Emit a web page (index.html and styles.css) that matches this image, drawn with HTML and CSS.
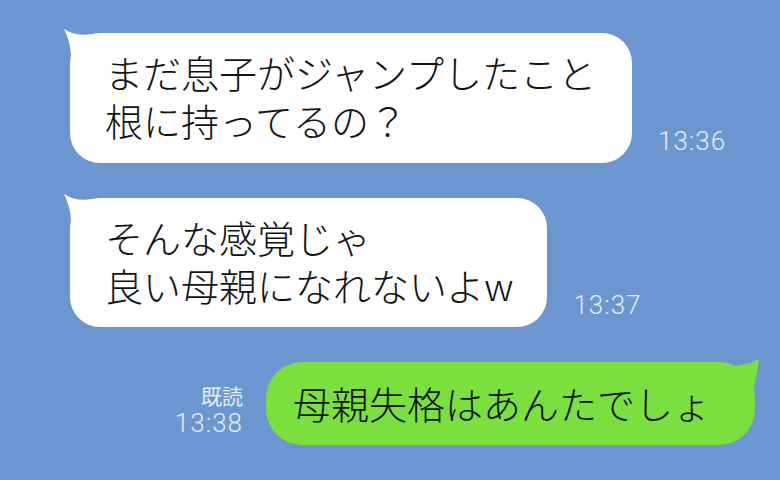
FILE: index.html
```html
<!DOCTYPE html>
<html lang="ja">
<head>
  <meta charset="UTF-8" />
  <meta name="viewport" content="width=device-width, initial-scale=1" />
  <title>トーク</title>
  <link rel="stylesheet" href="styles.css">
</head>
<body>

  <main class="chat">

    <div class="row incoming">
      <div class="bubble white first">
        <svg class="tail tail-left" viewBox="0 0 40 40" aria-hidden="true">
          <path d="M32,9 Q16,12 4,4 Q10,16 11,30 L32,30 Z" />
        </svg>
        <span class="line">まだ息子がジャンプしたこと</span>
        <span class="line">根に持ってるの？</span>
      </div>
      <span class="time">13:36</span>
    </div>

    <div class="row incoming">
      <div class="bubble white second">
        <svg class="tail tail-left" viewBox="0 0 40 40" aria-hidden="true">
          <path d="M32,9 Q16,12 4,4 Q10,16 11,30 L32,30 Z" />
        </svg>
        <span class="line">そんな感覚じゃ</span>
        <span class="line">良い母親になれないよw</span>
      </div>
      <span class="time">13:37</span>
    </div>

    <div class="row outgoing">
      <div class="meta">
        <span class="read">既読</span>
        <span class="time">13:38</span>
      </div>
      <div class="bubble green">
        <svg class="tail tail-right" viewBox="0 0 44 44" aria-hidden="true">
          <path d="M14,12 Q30,10 38,5 Q36,20 33,34 L14,34 Z" />
        </svg>
        <span class="line">母親失格はあんたでしょ</span>
      </div>
    </div>

  </main>

</body>
</html>
```

FILE: styles.css
```css
* {
  box-sizing: border-box;
}
html, body {
  margin: 0;
  padding: 0;
  height: 100%;
  background: #6c96cf;
  font-family: "Noto Sans CJK JP", "Noto Sans", sans-serif;
  overflow: hidden;
}
.chat {
  display: flex;
  flex-direction: column;
  gap: 35px;
  padding: 33px 25px 0 70px;
}
.row {
  display: flex;
  align-items: flex-end;
}
.incoming {
  gap: 26px;
}
.outgoing {
  justify-content: flex-end;
  gap: 23px;
}
.bubble {
  position: relative;
  display: flex;
  flex-direction: column;
  font-size: 38px;
  font-weight: 300;
  color: #111;
  white-space: nowrap;
}
.line {
  display: block;
  height: 48px;
  line-height: 48px;
}
.white {
  background: #fff;
  border-radius: 30px;
  padding: 15px 36px 19px 35px;
}
.second {
  padding: 15px 34px 18px 35px;
}
.green {
  background: #7ae03e;
  border-radius: 36px;
  padding: 17px 44px 18px 27px;
}
.tail {
  position: absolute;
  top: -8px;
  width: 40px;
  height: 40px;
}
.tail-left {
  left: -10px;
  fill: #fff;
}
.tail-right {
  right: -10px;
  width: 44px;
  height: 44px;
  fill: #7ae03e;
}
.time {
  font-family: Roboto, "Liberation Sans", sans-serif;
  font-weight: 300;
  font-size: 26px;
  line-height: 26px;
  letter-spacing: 1px;
  color: #e4ecf8;
  margin-bottom: 9px;
}
.meta {
  display: flex;
  flex-direction: column;
  align-items: flex-end;
  gap: 3px;
  margin-bottom: 9px;
}
.meta .time {
  margin-bottom: 0;
}
.read {
  font-size: 21px;
  line-height: 24px;
  color: #e4ecf8;
}
```
